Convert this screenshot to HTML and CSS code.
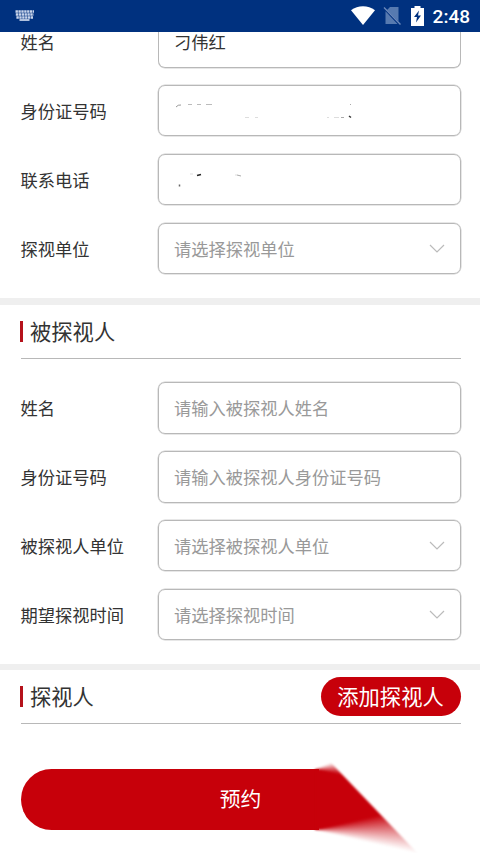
FILE: index.html
```html
<!DOCTYPE html>
<html lang="zh-CN">
<head>
<meta charset="utf-8">
<meta name="viewport" content="width=device-width, initial-scale=1">
<title>探视预约</title>
<link rel="stylesheet" href="styles.css">
</head>
<body>
<header class="status">
  <svg class="keyboard" width="20" height="12" viewBox="0 0 20 12">
    <path d="M.5 1.5H19M.8 4.500H18.600M1.400 7.500H18" stroke="#c9d5ec" stroke-width="2.300" stroke-dasharray="2.400 .5"/>
    <path d="M4.500 10H14.500" stroke="#dce5f5" stroke-width="1.600"/>
  </svg>
  <div class="indicators">
    <svg class="wifi" width="24" height="20" viewBox="0 0 24 20"><path d="M0 4.2C7-1.2 17-1.2 24 4.2L12 19Z" fill="#fff"/></svg>
    <svg class="sim" width="19" height="20" viewBox="0 0 19 20"><path d="M7 1H15.500V15.500L4 4ZM2.500 5.200L14.500 18H2.500Z" fill="#577ab0"/><path d="M1 1.500L17.500 18.500" stroke="#6d8abb" stroke-width="1.300"/></svg>
    <svg class="battery" width="13" height="20" viewBox="0 0 13 20"><path d="M3.500 0H9.500V2H13V20H0V2H3.500Z" fill="#fff"/><path d="M8 4.500L3 11H6L5 16.500L10 9.500H7Z" fill="#00317f"/></svg>
    <span class="clock">2:48</span>
  </div>
</header>
<main>
  <section class="form visitor">
    <div class="row partial"><label>姓名</label><div class="field value">刁伟红</div></div>
    <div class="row"><label>身份证号码</label><div class="field">
      <svg class="marks" width="190" height="24" viewBox="0 0 190 24" fill="none">
        <path d="M1 8Q3 5.500 6 6" stroke="#999"/><path d="M13 5.500H17M22 5.500H26M31 5.500H37" stroke="#bbb"/>
        <path d="M70 18.500H74M80 18.500H83M152 18.500H154M159 18.500H164" stroke="#ddd"/>
        <path d="M166 18.500H169M175 5.500H176" stroke="#aaa"/><path d="M174 17L176 18.500" stroke="#333" stroke-width="1.500"/>
      </svg></div></div>
    <div class="row"><label>联系电话</label><div class="field">
      <svg class="marks" width="190" height="24" viewBox="0 0 190 24" fill="none">
        <path d="M15 6H18M60 7H62" stroke="#ddd"/><path d="M22 7.500L26 6.500" stroke="#222" stroke-width="1.500"/><path d="M62 7L66 8" stroke="#aaa"/><path d="M4.500 16.500V18.500" stroke="#666" stroke-width="1.500"/>
      </svg></div></div>
    <div class="row"><label>探视单位</label><div class="field">请选择探视单位<svg class="chevron" width="16" height="9" viewBox="0 0 16 9"><path d="M1 1L8 8L15 1"/></svg></div></div>
  </section>
  <section class="form visited">
    <div class="heading"><h2>被探视人</h2></div>
    <div class="row"><label>姓名</label><div class="field">请输入被探视人姓名</div></div>
    <div class="row"><label>身份证号码</label><div class="field">请输入被探视人身份证号码</div></div>
    <div class="row"><label>被探视人单位</label><div class="field">请选择被探视人单位<svg class="chevron" width="16" height="9" viewBox="0 0 16 9"><path d="M1 1L8 8L15 1"/></svg></div></div>
    <div class="row"><label>期望探视时间</label><div class="field">请选择探视时间<svg class="chevron" width="16" height="9" viewBox="0 0 16 9"><path d="M1 1L8 8L15 1"/></svg></div></div>
  </section>
  <section class="form companions">
    <div class="heading"><h2>探视人</h2><button class="add">添加探视人</button></div>
    <button class="submit"><span class="tail"><span class="tail-shape"><i class="tail-top"></i><i class="tail-bottom"></i></span></span><span class="submit-text">预约</span></button>
  </section>
</main>
</body>
</html>
```

FILE: styles.css
```css
* { box-sizing: border-box; }
body {
  margin: 0;
  height: 853px;
  overflow: hidden;
  display: flex;
  flex-direction: column;
  background: #fff;
  color: #333;
  font-family: "Noto Sans CJK SC", sans-serif;
  font-size: 17.25px;
}
.status {
  flex: none;
  height: 32px;
  padding: 0 10px 0 15px;
  display: flex;
  align-items: center;
  justify-content: space-between;
  background: #00317f;
  color: #fff;
}
.indicators { display: flex; align-items: center; }
.sim { margin-left: 8px; }
.battery { margin-left: 9px; }
.clock {
  margin: 2px 0 0 9px;
  font: 500 19px/30px Roboto, sans-serif;
}
main { flex: 1; min-height: 0; }
.form { padding: 0 19.5px 0 20.5px; }
.visitor { padding-bottom: 24px; border-bottom: 7px solid #efefef; }
.row { display: flex; align-items: center; height: 51.5px; }
.row + .row { margin-top: 17.4px; }
label { width: 137px; flex: none; line-height: 17px; }
.field {
  flex: 1;
  height: 51.5px;
  padding: 0 15px 0 15.5px;
  display: flex;
  align-items: center;
  justify-content: space-between;
  border: 1px solid #b8b8b8;
  box-shadow: 0 0 0 .5px #d0d0d0;
  border-radius: 7px;
  color: #999;
  line-height: 17px;
}
.partial { height: 35.5px; align-items: flex-start; }
.partial label { padding-top: 1px; }
.partial .field {
  height: 35.5px;
  padding-top: 1px;
  align-items: flex-start;
  border-top: 0;
  border-radius: 0 0 7px 7px;
  box-shadow: 0 .5px 0 0 #d0d0d0;
}
.value { color: #333; }
.chevron { fill: none; stroke: #bbb; stroke-width: 1.2; }
.marks { margin: 1px 0 0 .5px; }
.heading {
  height: 54px;
  border-bottom: 1px solid #b8b8b8;
  display: flex;
  align-items: center;
  justify-content: space-between;
}
h2 {
  margin: 0 0 0 -.5px;
  display: flex;
  align-items: center;
  font-size: 21.3px;
  font-weight: 400;
  line-height: 28px;
  padding-bottom: 2px;
}
h2::before { content: ""; width: 3px; height: 21px; margin: 1px 7px 0 0; background: #b5121b; }
.visited { padding-bottom: 24px; border-bottom: 6px solid #efefef; }
.visited .heading { margin-bottom: 23px; }
button {
  border: 0;
  padding: 0;
  background: #c7000a;
  color: #fff;
  font-family: inherit;
  font-size: 21.3px;
}
.add { width: 140px; height: 39px; border-radius: 20px; line-height: 37px; padding-bottom: 2px; }
.submit {
  position: relative;
  display: block;
  width: 100%;
  height: 61px;
  margin-top: 44.5px;
  padding-bottom: 2px;
  background: linear-gradient(#c7000a, #c7000a) 0 0 / 298px 100% no-repeat;
  border-radius: 30.5px 0 0 30.5px;
  font-size: 20.8px;
}
.submit-text { position: relative; }
.tail {
  position: absolute;
  left: 294.5px;
  top: -8px;
  width: 110px;
  height: 94px;
  filter: blur(.8px);
}
.tail-shape {
  display: block;
  height: 100%;
  clip-path: polygon(0 0, 14px 0, 104px 94px, 0 94px);
}
.tail-top, .tail-bottom { display: block; }
.tail-top {
  height: 39px;
  background: conic-gradient(from 0deg at 0 8px, transparent 68deg, #c7000a 103deg, #c7000a 181deg, transparent 182deg);
}
.tail-bottom {
  height: 55px;
  background: conic-gradient(from 0deg at 0 30px, #c7000a 77deg, transparent 103deg, transparent 359deg, #c7000a 360deg);
}
```
